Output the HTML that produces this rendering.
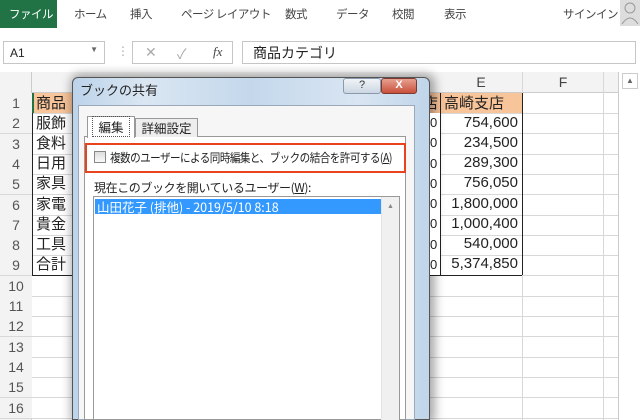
<!DOCTYPE html>
<html><head><meta charset="utf-8"><style>
*{margin:0;padding:0;box-sizing:border-box}
body{width:640px;height:420px;overflow:hidden;background:#fff;position:relative;font-family:"Liberation Sans","Noto Sans CJK JP",sans-serif;color:#222}
.a{position:absolute}
.jp{font-family:"Noto Sans CJK JP","Liberation Sans",sans-serif}
.tab{position:absolute;top:6px;font-size:11.5px;color:#444;letter-spacing:-0.5px}
.hl{position:absolute;left:0;width:618px;height:1px;background:#d8d8d8}
.rn{position:absolute;left:0;width:32px;text-align:center;font-size:14px;color:#555;background:#f3f3f3}
.cell{position:absolute;font-size:15px;height:20px;line-height:20px}
</style></head><body>
<div class="a" style="left:0;top:0;width:57px;height:28px;background:#217346"></div>
<div class="tab jp" style="left:9px;color:#fff">ファイル</div>
<div class="tab jp" style="left:74px">ホーム</div>
<div class="tab jp" style="left:130px">挿入</div>
<div class="tab jp" style="left:181px">ページ レイアウト</div>
<div class="tab jp" style="left:285px">数式</div>
<div class="tab jp" style="left:336px">データ</div>
<div class="tab jp" style="left:392px">校閲</div>
<div class="tab jp" style="left:444px">表示</div>
<div class="tab jp" style="left:563px">サインイン</div>
<div class="a" style="left:620px;top:0;width:20px;height:26px;background:#ddd"></div>
<svg class="a" style="left:620px;top:0" width="20" height="26"><circle cx="10" cy="8" r="5" fill="none" stroke="#999"/><path d="M2 24 Q10 12 18 24" fill="none" stroke="#999"/></svg>
<div class="a" style="left:3px;top:41px;width:102px;height:23px;border:1px solid #c6c6c6;font-size:12px;padding:4px 6px">A1<span style="position:absolute;right:6px;top:3px;font-size:8px;color:#666">▼</span></div>
<div class="a" style="left:117px;top:44px;color:#aaa;font-size:12px">⋮</div>
<div class="a" style="left:132px;top:41px;width:101px;height:23px;border:1px solid #c6c6c6;color:#aaa;font-size:14px"><span class="a" style="left:12px;top:2px">✕</span><span class="a" style="left:44px;top:2px">✓</span><i class="a" style="left:80px;top:2px;color:#444;font-family:'Liberation Serif',serif;font-size:13px">fx</i></div>
<div class="a jp" style="left:242px;top:41px;width:394px;height:23px;border:1px solid #c6c6c6;font-size:14px;padding:1px 10px">商品カテゴリ</div>
<div class="a" style="left:0;top:72px;width:618px;height:21px;background:#f3f3f3;border-bottom:1px solid #ccc"></div>
<div class="a" style="left:0;top:72px;width:32px;height:348px;background:#f3f3f3;border-right:1px solid #ccc"></div>
<div class="a" style="left:440px;top:74px;width:82px;text-align:center;font-size:14px;color:#444">E</div>
<div class="a" style="left:522px;top:74px;width:82px;text-align:center;font-size:14px;color:#444">F</div>
<div class="a" style="left:522px;top:72px;width:1px;height:348px;background:#d8d8d8"></div>
<div class="a" style="left:603px;top:72px;width:1px;height:348px;background:#d8d8d8"></div>
<div class="a" style="left:618px;top:72px;width:1px;height:348px;background:#ccc"></div>
<div class="a" style="left:622px;top:73px;width:16px;height:16px;border:1px solid #ccc;font-size:8px;text-align:center;color:#666;line-height:14px">▲</div>
<div id="rows"></div>
<div class="a" style="left:32px;top:93px;width:40px;height:20px;background:#f8c49a"></div>
<div class="a" style="left:440px;top:93px;width:82px;height:20px;background:#f8c49a"></div>
<div class="a" style="left:421px;top:93px;width:19px;height:20px;background:#f8c49a"></div>
<div class="a" style="left:32px;top:93px;width:2px;height:20px;background:#217346"></div>
<div class="a" style="left:32px;top:113px;width:1px;height:162px;background:#222"></div>
<div class="a" style="left:440px;top:93px;width:1px;height:182px;background:#222"></div>
<div class="a" style="left:522px;top:93px;width:1px;height:182px;background:#222"></div>
<div class="a" style="left:32px;top:275px;width:490px;height:1px;background:#222"></div>
<div class="cell jp" style="left:36px;top:93px">商品</div>
<div class="cell jp" style="left:36px;top:113px">服飾</div>
<div class="cell jp" style="left:36px;top:133px">食料</div>
<div class="cell jp" style="left:36px;top:153px">日用</div>
<div class="cell jp" style="left:36px;top:173px">家具</div>
<div class="cell jp" style="left:36px;top:194px">家電</div>
<div class="cell jp" style="left:36px;top:214px">貴金</div>
<div class="cell jp" style="left:36px;top:234px">工具</div>
<div class="cell jp" style="left:36px;top:254px">合計</div>
<div class="cell jp" style="left:444px;top:93px">高崎支店</div>
<div class="cell jp" style="left:423px;top:93px">店</div>
<div class="cell" style="left:440px;top:113px;width:78px;text-align:right">754,600</div>
<div class="cell" style="left:440px;top:133px;width:78px;text-align:right">234,500</div>
<div class="cell" style="left:440px;top:153px;width:78px;text-align:right">289,300</div>
<div class="cell" style="left:440px;top:173px;width:78px;text-align:right">756,050</div>
<div class="cell" style="left:440px;top:194px;width:78px;text-align:right">1,800,000</div>
<div class="cell" style="left:440px;top:214px;width:78px;text-align:right">1,000,400</div>
<div class="cell" style="left:440px;top:234px;width:78px;text-align:right">540,000</div>
<div class="cell" style="left:440px;top:254px;width:78px;text-align:right">5,374,850</div>
<div class="cell" style="left:430px;top:113px;width:10px;overflow:hidden;height:162px;line-height:20.3px;white-space:nowrap;font-size:13px;z-index:5;background:#fff">0<br>0<br>0<br>0<br>0<br>0<br>0<br>0</div>
<div class="a" style="left:72px;top:77px;width:358px;height:343px;box-shadow:2px 0 10px 3px rgba(0,0,0,.35);border-radius:6px 6px 0 0;border:1px solid #555;background:linear-gradient(90deg,#bcd3ea,#dae6f2 20%,#c4d8ec 50%,#d9e5f2 80%,#c0d5ea)"></div>
<div class="a jp" style="left:80px;top:80px;font-size:13px;color:#222">ブックの共有</div>
<div class="a" style="left:343px;top:78px;width:38px;height:16px;border:1px solid #8a9aae;border-radius:3px;background:linear-gradient(#f0f4f8,#ccd6e2);font-size:11px;text-align:center;color:#333">?</div>
<div class="a" style="left:381px;top:78px;width:36px;height:16px;border:1px solid #7a3a30;border-radius:3px;background:linear-gradient(#e8a090,#c8503c);font-size:11px;text-align:center;color:#fff;font-weight:bold">X</div>
<div class="a" style="left:78px;top:105px;width:337px;height:315px;background:#f6f6f6;border:1px solid #9aa8b8"></div>
<div class="a" style="left:84px;top:136px;width:322px;height:284px;background:#fff;border:1px solid #999"></div>
<div class="a jp" style="left:87px;top:116px;width:48px;height:22px;background:#fff;border:1px solid #999;border-bottom:none;font-size:12.5px;text-align:center;line-height:20px"><span style="border:1px dotted #555;padding:0 5px">編集</span></div>
<div class="a jp" style="left:135px;top:118px;width:63px;height:19px;background:#eee;border:1px solid #999;border-bottom:none;font-size:12.5px;text-align:center;line-height:18px">詳細設定</div>
<div class="a" style="left:85px;top:143px;width:321px;height:30px;border:2.5px solid #e8431c"></div>
<div class="a" style="left:94px;top:151px;width:12px;height:12px;border:1px solid #888;background:linear-gradient(#ddd,#fafafa)"></div>
<div class="a jp" style="left:110px;top:149px;font-size:12px;letter-spacing:-0.6px;white-space:nowrap;transform:scaleX(0.88);transform-origin:left">複数のユーザーによる同時編集と、ブックの結合を許可する(<u>A</u>)</div>
<div class="a jp" style="left:94px;top:179px;font-size:12px;letter-spacing:-0.4px">現在このブックを開いているユーザー(<u>W</u>):</div>
<div class="a" style="left:93px;top:196px;width:307px;height:224px;border:1px solid #999;background:#fff"></div>
<div class="a jp" style="left:95px;top:199px;width:286px;height:15px;background:#3399ff;color:#fff;font-size:12.5px;line-height:15px;padding-left:2px">山田花子 (排他) - 2019/5/10 8:18</div>
<div class="a" style="left:381px;top:197px;width:18px;height:223px;background:#f0f0f0;border-left:1px solid #e4e4e4;font-size:7px;color:#888;text-align:center;padding-top:6px">▲</div>
<script>
var h='';for(var i=1;i<=16;i++){var t=93+(i-1)*20.3;h+='<div class="rn" style="top:'+t+'px;height:20px;line-height:20px">'+i+'</div><div class="hl" style="top:'+(t+20)+'px"></div>';}
document.getElementById('rows').innerHTML=h;
</script>
</body></html>
